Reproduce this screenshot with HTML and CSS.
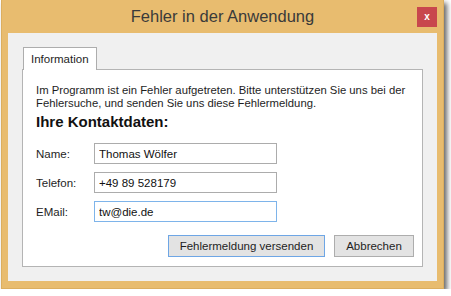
FILE: index.html
```html
<!DOCTYPE html>
<html lang="de">
  <head>
    <meta charset="UTF-8" />
    <title>Fehler in der Anwendung</title>
    <link rel="stylesheet" href="styles.css">
  </head>
  <body>
    <div class="window">
      <div class="titlebar">
        <span></span>
        <h1 class="title">Fehler in der Anwendung</h1>
        <button class="close">x</button>
      </div>
      <div class="client">
        <div class="tabs">
          <div class="tab">Information</div>
        </div>
        <div class="panel">
          <p class="intro">Im Programm ist ein Fehler aufgetreten. Bitte unterstützen Sie uns bei der<br>Fehlersuche, und senden Sie uns diese Fehlermeldung.</p>
          <h2 class="heading">Ihre Kontaktdaten:</h2>
          <div class="form">
            <label class="label">Name:</label>
            <input class="field" type="text" value="Thomas Wölfer">
            <label class="label">Telefon:</label>
            <input class="field" type="text" value="+49 89 528179">
            <label class="label">EMail:</label>
            <input class="field field-focus" type="text" value="tw@die.de">
          </div>
          <div class="actions">
            <button class="btn btn-default">Fehlermeldung versenden</button>
            <button class="btn btn-cancel">Abbrechen</button>
          </div>
        </div>
      </div>
    </div>
  </body>
</html>
```

FILE: styles.css
```css
body {
  margin: 0;
  background: #fff;
  font-family: "Liberation Sans", Arial, sans-serif;
  font-size: 11.5px;
  color: #1e1e1e;
}

/* Fensterrahmen */
.window {
  width: 443px;
  height: 289px;
  margin-left: 1px;
  box-sizing: border-box;
  background: #e8bc6f;
  border: 1px solid #dcae5f;
  border-top: 0;
  box-shadow: 3px 3px 5px rgba(0, 0, 0, 0.6);
  display: flex;
  flex-direction: column;
}
.titlebar {
  height: 33px;
  display: grid;
  grid-template-columns: 1fr auto 1fr;
  align-items: start;
}
.title {
  margin: 0;
  padding-top: 7px;
  font-size: 16.5px;
  font-weight: normal;
  color: #3a3a3a;
  line-height: 19px;
}
.close {
  justify-self: end;
  margin: 7px 6px 0 0;
  width: 20px;
  height: 20px;
  padding: 0;
  border: 0;
  background: #c8474d;
  color: #fff;
  font-family: "Liberation Sans", sans-serif;
  font-size: 10px;
  font-weight: bold;
  line-height: 18px;
}

/* Innenbereich */
.client {
  flex: 1;
  margin: 0 6px 7px;
  padding: 14px;
  background: #f0f0f0;
  display: flex;
  flex-direction: column;
}
.tabs {
  display: flex;
  padding-left: 1px;
}
.tab {
  height: 22px;
  margin-bottom: -1px;
  padding: 0 7px;
  line-height: 23px;
  background: #fff;
  border: 1px solid #adadad;
  border-bottom: 0;
  position: relative;
  z-index: 1;
}
.panel {
  flex: 1;
  background: #fff;
  border: 1px solid #b4b4b4;
  padding: 0 8px 0 13px;
}
.intro {
  margin: 14px 0 0;
  font-size: 11.3px;
  line-height: 12.5px;
  white-space: nowrap;
}
.heading {
  margin: 4px 0 0;
  font-size: 15px;
  font-weight: bold;
  line-height: 17px;
  color: #111;
}

/* Kontaktfelder */
.form {
  margin-top: 13px;
  display: grid;
  grid-template-columns: 58px 183px;
  grid-auto-rows: 21px;
  row-gap: 8px;
  align-items: center;
}
.field {
  box-sizing: border-box;
  width: 183px;
  height: 21px;
  margin: 0;
  padding: 0 4px;
  border: 1px solid #acacac;
  font: inherit;
  color: #111;
  outline: none;
}
.field-focus {
  border-color: #7eb4ea;
}

.actions {
  margin-top: 13px;
  display: flex;
  justify-content: flex-end;
  gap: 9px;
}
.btn {
  height: 22px;
  margin: 0;
  padding: 0;
  font: inherit;
  color: #1e1e1e;
  background: #e3e3e3;
  border: 1px solid #adadad;
}
.btn-default {
  width: 157px;
  border-color: #6ea6e5;
}
.btn-cancel {
  width: 80px;
}
```
